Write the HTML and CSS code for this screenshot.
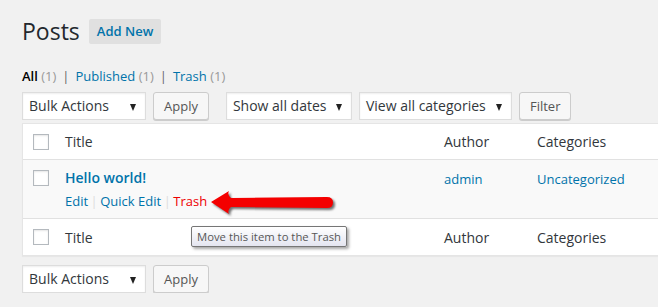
FILE: index.html
```html
<!DOCTYPE html>
<html lang="en">
<head>
    <meta charset="UTF-8">
    <title>Posts</title>
    <link rel="stylesheet" href="styles.css">
</head>
<body>
    <div class="wrap">
        <div class="page-head">
            <h1>Posts</h1>
            <a class="add-new">Add New</a>
        </div>
        <ul class="subsubsub">
            <li class="current">All <span class="count">(1)</span></li>
            <li class="sep">|</li>
            <li><a>Published</a> <span class="count">(1)</span></li>
            <li class="sep">|</li>
            <li><a>Trash</a> <span class="count">(1)</span></li>
        </ul>
        <div class="tablenav">
            <div class="select w-bulk">Bulk Actions</div>
            <button class="btn">Apply</button>
            <div class="select w-dates gap">Show all dates</div>
            <div class="select w-cats">View all categories</div>
            <button class="btn">Filter</button>
        </div>
        <div class="table">
            <div class="row head">
                <div class="cb"><span class="box"></span></div>
                <div class="col-title">Title</div>
                <div class="col-author">Author</div>
                <div class="col-cats">Categories</div>
            </div>
            <div class="row post">
                <div class="cb"><span class="box"></span></div>
                <div class="col-title">
                    <a class="post-title">Hello world!</a>
                    <div class="row-actions">
                        <a>Edit</a><span class="bar">|</span><a>Quick Edit</a><span class="bar">|</span><a class="trash">Trash</a>
                        <svg class="arrow" width="130" height="34" viewBox="0 0 130 34">
                            <path d="M2 17 L20 6 Q18 10 22 13 L118 12 Q124 12 124 17.5 Q124 23 118 23 L22 22 Q18 25 20 29 Z" fill="#f40000"/>
                        </svg>
                        <span class="tooltip">Move this item to the Trash</span>
                    </div>
                </div>
                <div class="col-author"><a>admin</a></div>
                <div class="col-cats"><a>Uncategorized</a></div>
            </div>
            <div class="row foot">
                <div class="cb"><span class="box"></span></div>
                <div class="col-title">Title</div>
                <div class="col-author">Author</div>
                <div class="col-cats">Categories</div>
            </div>
        </div>
        <div class="tablenav bottom">
            <div class="select w-bulk">Bulk Actions</div>
            <button class="btn">Apply</button>
        </div>
    </div>
</body>
</html>
```

FILE: styles.css
```css
*{
    margin:0;
    padding:0;
    box-sizing: border-box;
}
body{
    background-color: #f1f1f1;
    font-family: "Open Sans", "Liberation Sans", sans-serif;
    font-size: 13px;
    color: #444;
    overflow: hidden;
}
a{
    color: #0073aa;
}
.wrap{
    padding: 15px 0 0 22px;
    width: 700px;
}
.page-head{
    display: flex;
    align-items: center;
    gap: 9px;
}
h1{
    font-size: 23px;
    font-weight: 400;
    color: #23282d;
    line-height: 32px;
}
.add-new{
    background: #e0e0e0;
    border-radius: 2px;
    font-weight: 600;
    padding: 4px 8px;
    line-height: 17px;
}
.subsubsub{
    list-style: none;
    display: flex;
    gap: 5px;
    margin-top: 20px;
    line-height: 18px;
}
.subsubsub .current{
    color: #000;
    font-weight: 600;
}
.subsubsub .count{
    color: #999;
    font-weight: 400;
}
.subsubsub .sep{
    color: #666;
    padding: 0 1px;
}
.tablenav{
    display: flex;
    align-items: center;
    gap: 7px;
    margin-top: 7px;
    height: 28px;
}
.tablenav.bottom{
    margin-top: 9px;
}
.select{
    height: 28px;
    background: #fff;
    border: 1px solid #ddd;
    box-shadow: inset 0 1px 2px rgba(0,0,0,0.07);
    font-size: 14px;
    line-height: 26px;
    padding: 0 6px;
    color: #32373c;
    position: relative;
}
.select::after{
    content: "";
    position: absolute;
    right: 9px;
    top: 11px;
    border-left: 3px solid transparent;
    border-right: 3px solid transparent;
    border-top: 7px solid #222;
}
.w-bulk{ width: 124px; }
.w-dates{ width: 126px; }
.w-cats{ width: 153px; }
.gap{ margin-left: 10px; }
.btn{
    font: inherit;
    height: 28px;
    padding: 0 10px;
    background: #f7f7f7;
    border: 1px solid #ccc;
    border-radius: 3px;
    box-shadow: 0 1px 0 #ccc;
    color: #555;
    line-height: 26px;
}
.table{
    margin-top: 3px;
    background: #fff;
    border: 1px solid #e5e5e5;
    box-shadow: 0 1px 1px rgba(0,0,0,0.04);
}
.row{
    display: flex;
    align-items: flex-start;
}
.row.head{
    height: 36px;
    border-bottom: 1px solid #e1e1e1;
    align-items: center;
}
.row.foot{
    height: 37px;
    border-top: 1px solid #e1e1e1;
    align-items: center;
}
.row.post{
    background: #f9f9f9;
    height: 58px;
    padding-top: 7px;
}
.head, .foot{
    font-size: 14px;
    color: #32373c;
}
.cb{
    width: 42px;
    padding-left: 10px;
    display: flex;
}
.post .cb{
    padding-top: 3px;
}
.box{
    width: 16px;
    height: 16px;
    border: 1px solid #b4b9be;
    background: #fff;
    box-shadow: inset 0 1px 2px rgba(0,0,0,0.1);
}
.col-title{
    width: 379px;
    position: relative;
}
.col-author{
    width: 93px;
}
.col-cats{
    flex: 1;
}
.post .col-author, .post .col-cats{
    padding-top: 3px;
}
.post-title{
    font-size: 14px;
    font-weight: 600;
    line-height: 22px;
    display: block;
}
.row-actions{
    margin-top: 1px;
    line-height: 22px;
    position: relative;
}
.row-actions .bar{
    color: #ddd;
    padding: 0 2.5px;
}
.row-actions .trash{
    color: #ee0000;
}
.arrow{
    position: absolute;
    left: 144px;
    top: -5px;
    filter: drop-shadow(2px 2px 1px rgba(0,0,0,0.55));
}
.tooltip{
    position: absolute;
    left: 126px;
    top: 36px;
    height: 21px;
    padding: 0 5px;
    font-size: 11.3px;
    line-height: 19px;
    color: #575757;
    white-space: nowrap;
    background: linear-gradient(#ffffff, #e4e5f0);
    border: 1px solid #767676;
    border-radius: 2px;
    box-shadow: 2px 2px 3px rgba(0,0,0,0.35);
}
```
